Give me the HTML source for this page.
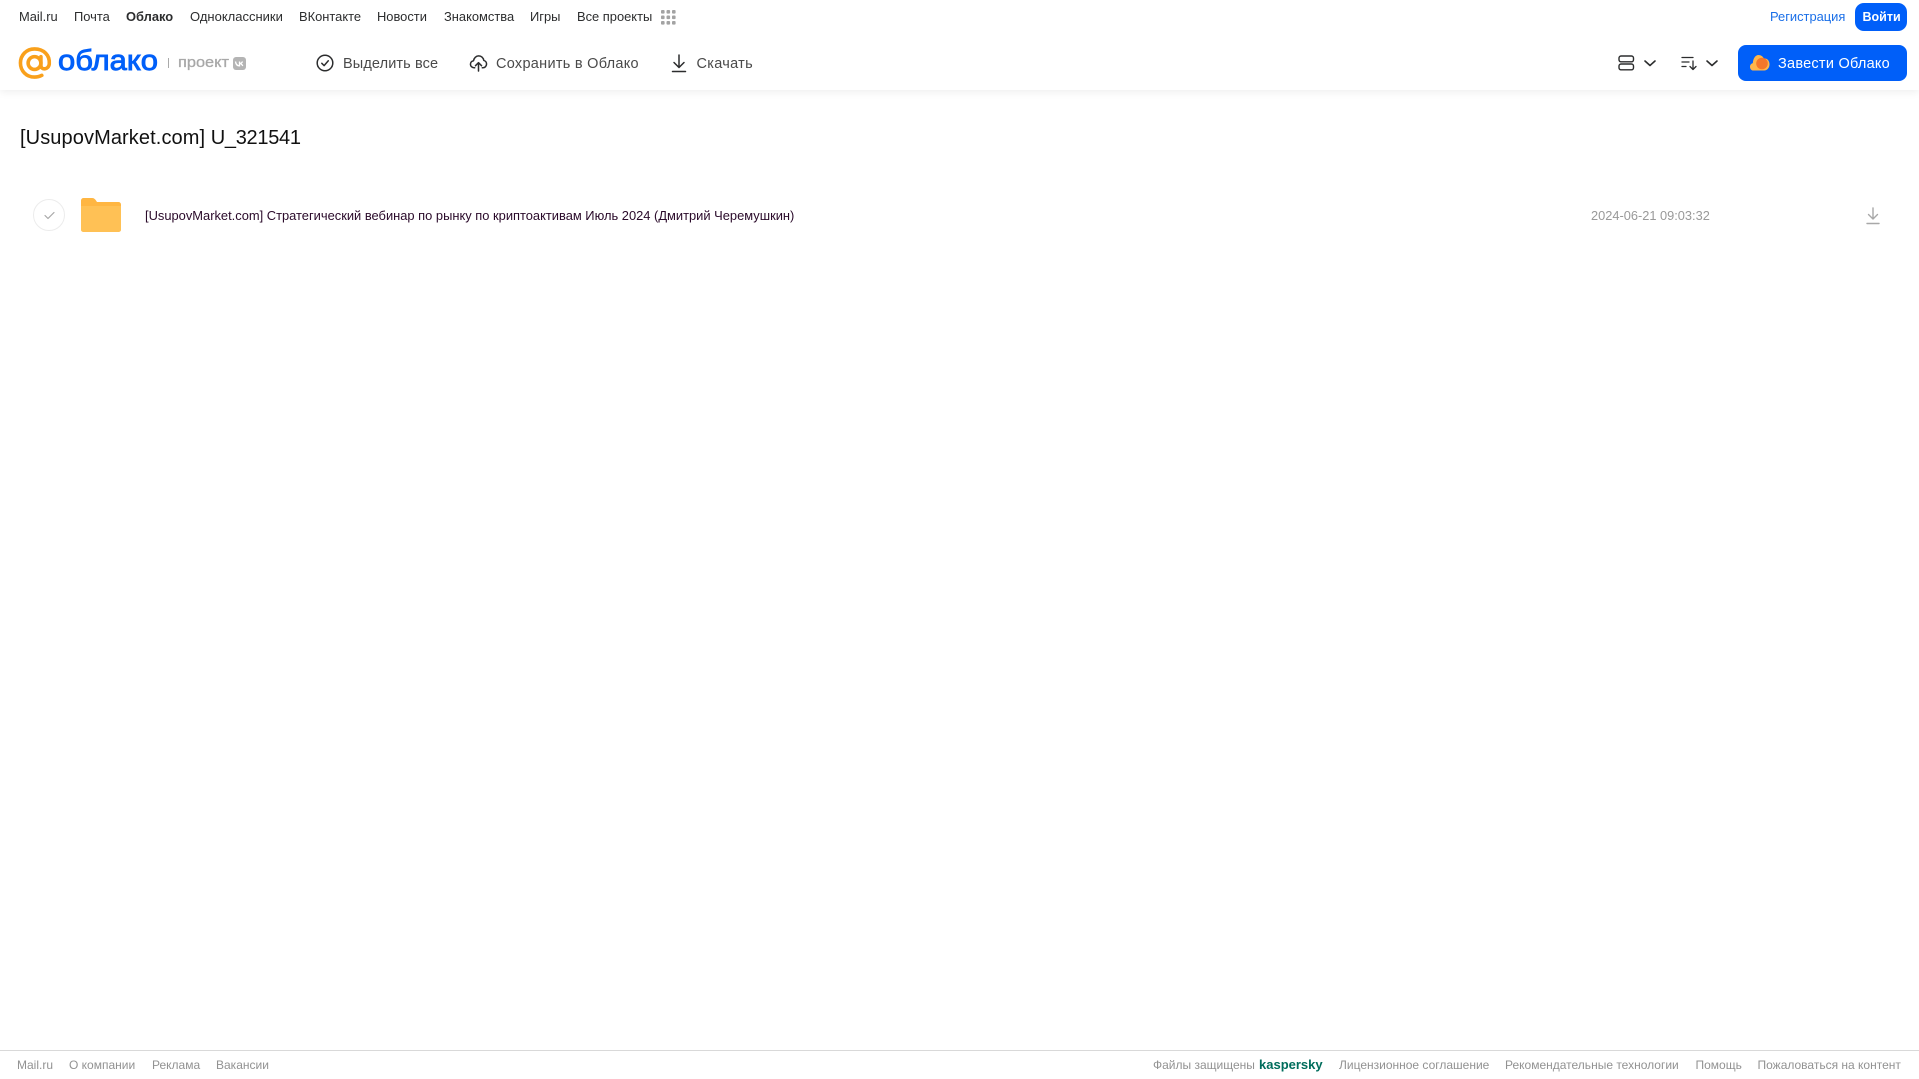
<!DOCTYPE html>
<html lang="ru"><head><meta charset="utf-8"><title>Облако</title>
<style>
html,body{margin:0;padding:0;background:#fff;width:1919px;height:1079px;overflow:hidden;font-family:"Liberation Sans",Arial,sans-serif}
.t{position:absolute;white-space:nowrap;line-height:20px}
.n{top:7px;font-size:12.9px;color:#2c2d2e;transform-origin:0 50%}
.b{top:53.5px;font-size:14.5px;color:#4a4a4a;letter-spacing:.2px}
.f{top:1055px;font-size:12px;color:#929292}
svg{position:absolute;overflow:visible}
#head{position:absolute;left:0;top:0;width:1919px;height:90px;background:#fff;box-shadow:0 2px 8px rgba(0,0,0,.07)}
</style></head><body>
<div id="head"></div>
<span class="t n" style="left:19px">Mail.ru</span>
<span class="t n" style="left:74px">Почта</span>
<span class="t n" style="left:126px;font-weight:bold">Облако</span>
<span class="t n" style="left:190px;font-size:13px">Одноклассники</span>
<span class="t n" style="left:299px">ВКонтакте</span>
<span class="t n" style="left:377px">Новости</span>
<span class="t n" style="left:444px">Знакомства</span>
<span class="t n" style="left:530px">Игры</span>
<span class="t n" style="left:577px">Все проекты</span>
<svg style="left:661px;top:10px" width="15" height="15" fill="#a3a3a3"><rect x="0" y="0" width="3.6" height="3.6" rx="1"/><rect x="5.500" y="0" width="3.6" height="3.6" rx="1"/><rect x="11" y="0" width="3.6" height="3.6" rx="1"/><rect x="0" y="5.500" width="3.6" height="3.6" rx="1"/><rect x="5.500" y="5.500" width="3.6" height="3.6" rx="1"/><rect x="11" y="5.500" width="3.6" height="3.6" rx="1"/><rect x="0" y="11" width="3.6" height="3.6" rx="1"/><rect x="5.500" y="11" width="3.6" height="3.6" rx="1"/><rect x="11" y="11" width="3.6" height="3.6" rx="1"/></svg>
<span class="t n" style="left:1770px;color:#1a6fe8">Регистрация</span>
<div style="position:absolute;left:1855px;top:3px;width:52px;height:28px;border-radius:9px;background:#005ff9"></div>
<span class="t n" style="left:1862.500px;color:#fff;font-weight:bold;font-size:12.500px">Войти</span>

<svg style="left:18px;top:47px" width="34" height="33" viewBox="0 0 34 34" fill="none" stroke="#f9a01b" stroke-width="3.700" stroke-linecap="round"><circle cx="16.500" cy="16.500" r="6.600"/><path d="M23.100 10v9c0 5 7.800 4.700 8.600-1.500C32.500 8.500 26 2 16.500 2 8 2 2 8.500 2 16.500S8 31 16.500 31c3 0 5.500-.7 7.500-1.800"/></svg>
<svg style="left:56px;top:42px" width="110" height="40"><text x="2" y="28" font-family="Liberation Sans" font-size="29" fill="#005ff9" stroke="#005ff9" stroke-width=".9" textLength="100" lengthAdjust="spacingAndGlyphs">облако</text></svg>
<div style="position:absolute;left:168px;top:58px;width:1px;height:10px;background:#aaa"></div>
<svg style="left:176px;top:50px" width="60" height="26"><text x="2" y="17" font-family="Liberation Sans" font-size="15" fill="#a8a8a8" stroke="#a8a8a8" stroke-width=".3" textLength="51" lengthAdjust="spacingAndGlyphs">проект</text></svg>
<div style="position:absolute;left:233px;top:57px;width:13px;height:13px;border-radius:3px;background:#b4b4b4"></div>
<svg style="left:233px;top:57px" width="13" height="13" fill="none" stroke="#fff" stroke-width="1.300"><path d="M2.500 4.500c.3 2.600 1.700 4.300 4 4.300V4.500M6.500 6.500c1.300 0 2.500-.8 3-2M6.500 6.500c1.300.1 2.600 1 3.300 2.400"/></svg>

<svg style="left:316px;top:53.500px" width="18" height="18" fill="none" stroke="#2c2d2e" stroke-width="1.500" stroke-linecap="round" stroke-linejoin="round"><circle cx="9" cy="9" r="7.800"/><path d="M5.800 9.300l2.300 2.300 4.200-4.800"/></svg>
<span class="t b" style="left:343px;letter-spacing:.12px">Выделить все</span>
<svg style="left:469px;top:54px" width="19" height="18" viewBox="0 0 19 19" fill="none" stroke="#2c2d2e" stroke-width="1.600" stroke-linecap="round" stroke-linejoin="round"><path d="M5.500 14.500H4.800C2.700 14.500 1 12.900 1 10.800c0-1.900 1.400-3.400 3.200-3.700C4.700 4.200 7 2 9.700 2c2.800 0 5 2 5.400 4.800 1.700.4 2.900 2 2.900 3.800 0 2.200-1.700 3.900-3.800 3.900h-.7M9.500 18V9.500M6.300 12.300l3.200-3.200 3.200 3.200"/></svg>
<span class="t b" style="left:496px;letter-spacing:.28px">Сохранить в Облако</span>
<svg style="left:671px;top:54px" width="16" height="19" fill="none" stroke="#2c2d2e" stroke-width="1.500" stroke-linecap="round" stroke-linejoin="round"><path d="M8 1v12M3 8.500l5 5 5-5M1.500 17.500h13"/></svg>
<span class="t b" style="left:696.500px;letter-spacing:.3px">Скачать</span>

<svg style="left:1618px;top:55px" width="16" height="16" fill="none" stroke="#2c2d2e" stroke-width="1.400"><rect x="1" y="1" width="14.500" height="5.800" rx="2"/><rect x="1" y="9" width="14.500" height="5.800" rx="2"/></svg>
<svg style="left:1644px;top:60px" width="12" height="7" fill="none" stroke="#2c2d2e" stroke-width="1.600" stroke-linecap="round" stroke-linejoin="round"><path d="M1 1l5 4.500L11 1"/></svg>
<svg style="left:1681px;top:56px" width="17" height="14" fill="none" stroke="#2c2d2e" stroke-width="1.300" stroke-linecap="round" stroke-linejoin="round"><path d="M1 1.500h11M1 6h7M1 10.500h4M12 5v8M9 10.500l3 3 3-3"/></svg>
<svg style="left:1706px;top:60px" width="12" height="7" fill="none" stroke="#2c2d2e" stroke-width="1.600" stroke-linecap="round" stroke-linejoin="round"><path d="M1 1l5 4.500L11 1"/></svg>
<div style="position:absolute;left:1738px;top:45px;width:169px;height:36px;border-radius:8px;background:#005ff9"></div>
<svg style="left:1750px;top:54px" width="20" height="18"><path d="M2.500 16.500C.8 16 0 14.400 0 12.800c0-1.900 1.200-3.300 2.800-3.700C3.200 4.200 5.500 1 8.500 1c2.500 0 4.500 1.500 5.300 3.500 3.300-.4 5.700 2 5.700 5.800 0 3.500-2.200 6.200-5.300 6.200H3.500z" fill="#ffb64a"/><circle cx="12" cy="9.500" r="5.800" fill="#f4772a"/></svg>
<span class="t b" style="left:1778px;color:#fff;letter-spacing:.25px">Завести Облако</span>

<span class="t" style="left:20px;top:127px;font-size:20px;color:#111;line-height:22px"><span style="letter-spacing:.1px">[UsupovMarket.com]</span> <span style="letter-spacing:-.3px">U_321541</span></span>

<div style="position:absolute;left:33px;top:199px;width:30px;height:30px;border:1px solid #ececec;border-radius:50%"></div>
<svg style="left:43.500px;top:211px" width="11" height="9" fill="none" stroke="#a8a8a8" stroke-width="1.200" stroke-linecap="round" stroke-linejoin="round"><path d="M1 4.500l3 3 6-6"/></svg>
<svg style="left:81px;top:198px" width="40" height="34"><path d="M0 2.500A2.500 2.500 0 0 1 2.500 0H11c2 0 3 1 4 2.500L16 4H37.500A2.500 2.500 0 0 1 40 6.500V31.500A2.500 2.500 0 0 1 37.500 34H2.500A2.500 2.500 0 0 1 0 31.500z" fill="#ffb642"/><path d="M0 8H40V31.500A2.500 2.500 0 0 1 37.500 34H2.500A2.500 2.500 0 0 1 0 31.500z" fill="#ffc155"/></svg>
<span class="t" style="left:145px;top:206px;font-size:12.900px;color:#2a0a2a">[UsupovMarket.com] Стратегический вебинар по рынку по криптоактивам Июль 2024 (Дмитрий Черемушкин)</span>
<span class="t" style="left:1591px;top:206px;font-size:12.800px;color:#999">2024-06-21 09:03:32</span>
<svg style="left:1866px;top:207px" width="14" height="18" fill="none" stroke="#a8a8a8" stroke-width="1.400" stroke-linecap="round" stroke-linejoin="round"><path d="M7 1v11M2.500 7.500L7 12l4.500-4.500M1 16.500h12"/></svg>

<div style="position:absolute;left:0;top:1050px;width:1919px;height:1px;background:#d9d9d9"></div>
<span class="t f" style="left:17px">Mail.ru</span>
<span class="t f" style="left:69px">О компании</span>
<span class="t f" style="left:152px">Реклама</span>
<span class="t f" style="left:216px">Вакансии</span>
<span class="t f" style="left:1153px">Файлы защищены</span>
<span class="t f" style="left:1259px;color:#006d5c;font-weight:bold;font-size:13px">kaspersky</span>
<span class="t f" style="left:1339px">Лицензионное соглашение</span>
<span class="t f" style="left:1505px">Рекомендательные технологии</span>
<span class="t f" style="left:1695.500px">Помощь</span>
<span class="t f" style="left:1757.500px">Пожаловаться на контент</span>
</body></html>
